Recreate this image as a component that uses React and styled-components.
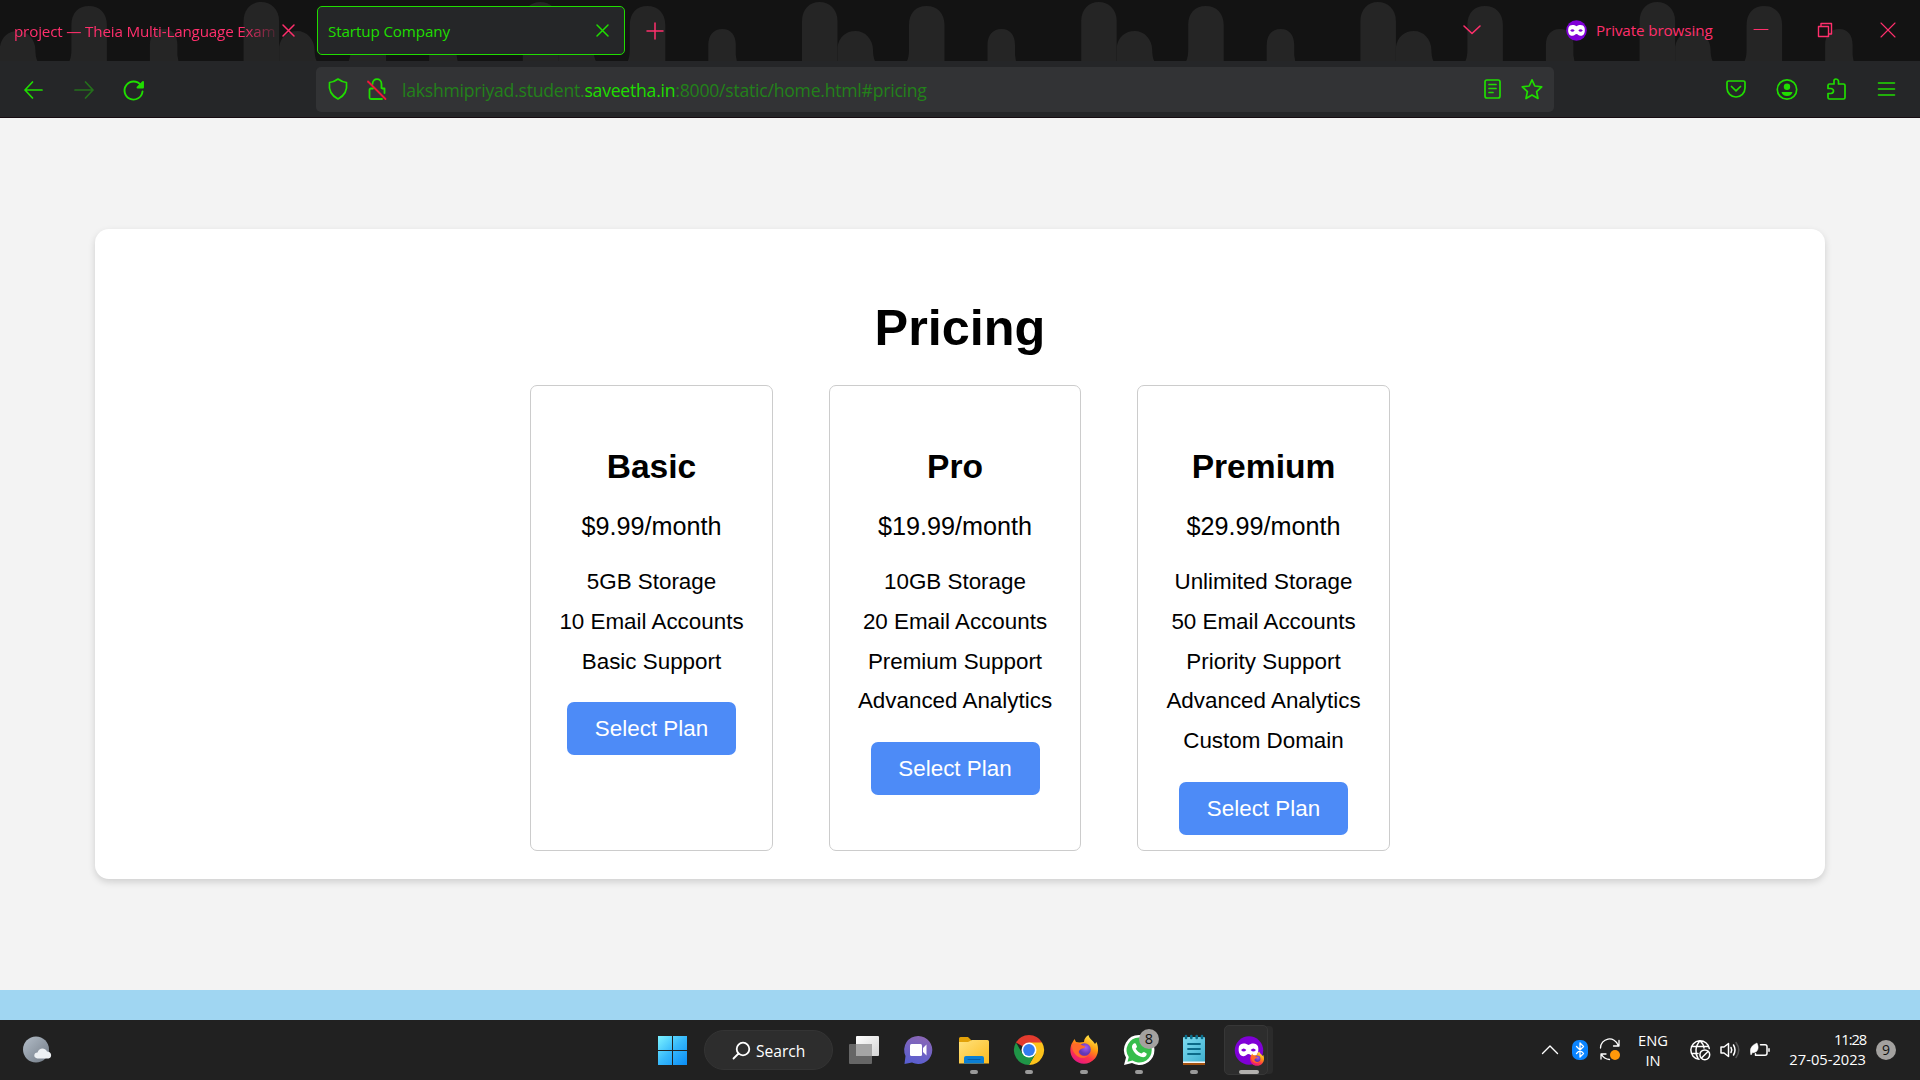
import React from 'react';
import styled, { createGlobalStyle } from 'styled-components';

const GREEN = '#20dd00';
const PINK = '#ff2f6c';

const Global = createGlobalStyle`
  * { box-sizing: border-box; }
  body { margin: 0; background: #f3f3f3; overflow: hidden; }
`;

const Screen = styled.div`
  width: 1920px;
  height: 1080px;
  display: flex;
  flex-direction: column;
  overflow: hidden;
  font-family: "Open Sans", "Noto Sans", sans-serif;
`;

/* ---------- browser chrome ---------- */

const TabStrip = styled.header`
  position: relative;
  height: 61px;
  flex: none;
  display: flex;
  align-items: flex-start;
  background: #131313;
  color: ${PINK};
`;

const Backdrop = styled.svg`
  position: absolute;
  inset: 0;
`;

const Icon = styled.svg`
  position: relative;
  flex: none;
  display: block;
  margin-left: ${(p) => p.$ml || 0}px;
  margin-top: ${(p) => p.$mt || 0}px;
  overflow: visible;
  fill: none;
  stroke: ${(p) => p.$color || 'none'};
  stroke-width: ${(p) => p.$sw || 1.7}px;
  stroke-linecap: round;
  stroke-linejoin: round;
`;

const Label = styled.span`
  position: relative;
  display: block;
  flex: none;
  white-space: nowrap;
  font-size: ${(p) => p.$size || 15}px;
  line-height: 20px;
  letter-spacing: ${(p) => p.$ls || 0}px;
  color: ${(p) => p.$color || 'inherit'};
`;

const BackTab = styled.div`
  width: 317px;
  height: 61px;
  flex: none;
  display: flex;
  padding: 21px 0 0 14px;
`;

const FadingTitle = styled.div`
  width: 264px;
  flex: none;
  mask-image: linear-gradient(to right, #000 228px, transparent 268px);
`;

const ActiveTab = styled.div`
  position: relative;
  width: 308px;
  height: 49px;
  flex: none;
  margin-top: 6px;
  padding: 14px 16px 0 10px;
  display: flex;
  justify-content: space-between;
  border: 1.5px solid ${GREEN};
  border-radius: 5px;
  background: #252628;
  color: ${GREEN};
`;

const WindowControls = styled.div`
  position: relative;
  display: flex;
  margin-left: auto;
  padding-right: 25px;
`;

const PrivateLabel = styled.div`
  width: 138px;
  padding: 20px 0 0 9px;
`;

const Toolbar = styled.nav`
  height: 57px;
  flex: none;
  display: flex;
  align-items: flex-start;
  background: #252628;
  border-bottom: 1px solid #160c11;
`;

const UrlBar = styled.div`
  width: 1238px;
  height: 45px;
  flex: none;
  margin: 6px 0 0 172px;
  display: flex;
  border-radius: 5px;
  background: #323335;
`;

const Url = styled(Label)`
  margin: 13px auto 0 15px;
  color: #23811a;
  b { font-weight: 400; color: ${GREEN}; }
`;

const UrlActions = styled.div`
  display: flex;
  padding-right: 11px;
`;

/* ---------- page ---------- */

const Page = styled.main`
  height: 872px;
  flex: none;
  padding: 111px 95px 0;
  background: #f3f3f3;
  font-family: "Liberation Sans", Arial, sans-serif;
  color: #000;
`;

const PricingPanel = styled.section`
  height: 650px;
  padding-top: 70px;
  display: flex;
  flex-direction: column;
  align-items: center;
  background: #fff;
  border-radius: 14px;
  box-shadow: 0 3px 7px rgba(0, 0, 0, 0.15);
`;

const Title = styled.h1`
  margin: 0 0 28px;
  font-size: 50.4px;
  line-height: 58px;
`;

const Plans = styled.div`
  display: flex;
  gap: 56px;
`;

const Plan = styled.article`
  width: ${(p) => p.$width}px;
  height: 466px;
  padding-top: 62px;
  display: flex;
  flex-direction: column;
  align-items: center;
  border: 1px solid #ccc;
  border-radius: 7px;
`;

const PlanName = styled.h2`
  margin: 0 0 26px;
  font-size: 33.6px;
  line-height: 38px;
`;

const Price = styled.p`
  margin: 0 0 22px;
  font-size: 25.2px;
  line-height: 28px;
`;

const Features = styled.ul`
  margin: 0 0 20.6px;
  padding: 0;
  list-style: none;
  text-align: center;
  font-size: 22.4px;
  line-height: 39.8px;
  white-space: nowrap;
`;

const SelectButton = styled.button`
  width: 169px;
  height: 53px;
  flex: none;
  padding: 0;
  border: 0;
  border-radius: 7px;
  background: #4d8bf7;
  color: #fff;
  font: 22.4px/53px "Liberation Sans", Arial, sans-serif;
`;

const FooterStrip = styled.div`
  height: 30px;
  flex: none;
  background: #a0d6f2;
`;

/* ---------- taskbar ---------- */

const Taskbar = styled.footer`
  height: 60px;
  flex: none;
  display: flex;
  align-items: flex-start;
  background: #212121;
  color: #fff;
`;

const SearchPill = styled.div`
  width: 129px;
  height: 40px;
  flex: none;
  margin: 10px 0 0 17px;
  padding: 10px 0 0 28px;
  display: flex;
  gap: 6px;
  border-radius: 20px;
  background: #2d2d2d;
  border: 1px solid #343434;
`;

const AppGroup = styled.div`
  display: flex;
  margin-left: 13px;
`;

const AppButton = styled.div`
  position: relative;
  width: 55px;
  height: 60px;
  flex: none;
  display: flex;
  justify-content: center;
  padding-top: 15px;
  &::after {
    content: "";
    position: absolute;
    bottom: 6px;
    left: 50%;
    width: 8px;
    height: 4px;
    margin-left: -4px;
    border-radius: 2px;
    background: #9a9a9a;
  }
`;

const Badge = styled.span`
  position: absolute;
  top: 9px;
  left: 28px;
  width: 20px;
  height: 20px;
  border-radius: 50%;
  background: #a3a19f;
  color: #111;
  font-size: 14.5px;
  line-height: 20px;
  text-align: center;
`;

const ActiveApp = styled.div`
  position: relative;
  width: 44px;
  height: 50px;
  flex: none;
  margin: 5px 0 0 3px;
  padding: 10px 0 0 10px;
  border-radius: 5px;
  border: 1px solid #373737;
  background: #2d2d2d;
  box-shadow: 6px 0 0 -1px #2b2b2b;
  &::after {
    content: "";
    position: absolute;
    left: 14px;
    bottom: 0;
    width: 20px;
    height: 4px;
    border-radius: 2px;
    background: #b3b1af;
  }
`;

const Tray = styled.div`
  display: flex;
  margin-left: auto;
  padding-right: 24px;
`;

const Stack = styled.div`
  width: ${(p) => p.$width}px;
  margin-left: ${(p) => p.$ml}px;
  padding-top: ${(p) => p.$pt || 9}px;
  display: flex;
  flex-direction: column;
  align-items: ${(p) => p.$align || 'center'};
`;

const Count = styled.span`
  width: 20px;
  height: 20px;
  margin: 20px 0 0 10px;
  border-radius: 50%;
  background: #a3a19f;
  color: #111;
  font-size: 14px;
  line-height: 20px;
  text-align: center;
`;

/* ---------- drawings ---------- */

const ARCH_PERIOD = 279.2;

function Arches() {
  return (
    <Backdrop width="1920" height="61" fill="#252525">
      {[0, 1, 2, 3, 4, 5, 6].map((n) => (
        <g key={n} transform={`translate(${n * ARCH_PERIOD - 35.6} 0)`}>
          <path d="M0 61V21C0 9 8 2 17.5 2S35.500 9 35.500 21V61z" />
          <path d="M35.500 61V47C37 37 44 31 53.500 31S71 39 71 50Q71 57 73 61z" />
          <path d="M105 61Q107 57 107 50V25C107 13 114 6 124.500 6S142.500 13 142.500 25V61z" />
          <path d="M185.500 61V45C185.500 35 191 29 199.500 29S213 35 213 45V55L214 61z" />
        </g>
      ))}
    </Backdrop>
  );
}

const Cross = ({ ml, mt, size = 11, color, sw = 1.5 }) => (
  <Icon width={size} height={size} $ml={ml} $mt={mt} $color={color} $sw={sw}>
    <path d={`M0 0L${size} ${size}M${size} 0L0 ${size}`} />
  </Icon>
);

const MaskShape = () => (
  <path
    d="M-7-2.500C-6-5.500-2-5.200 0-3.600C2-5.200 6-5.500 7-2.500C8 2 6 4.800 3.500 4.600C1.800 4.500 1.200 3 0 3S-1.800 4.500-3.500 4.600C-6 4.800-8 2-7-2.500zM-5.500 0Q-3.500 2.300-1.600 0Q-3.500-2.300-5.500 0zM5.500 0Q3.500 2.300 1.600 0Q3.500-2.300 5.500 0z"
    fill="#fff"
    fillRule="evenodd"
  />
);

const FirefoxGlyph = ({ id }) => (
  <>
    <defs>
      <linearGradient id={`${id}a`} x1=".8" y1="0" x2=".3" y2="1">
        <stop offset="0" stopColor="#fff44f" />
        <stop offset=".4" stopColor="#ff980e" />
        <stop offset=".7" stopColor="#ff3647" />
        <stop offset="1" stopColor="#e31587" />
      </linearGradient>
      <radialGradient id={`${id}b`} cx=".6" cy=".35">
        <stop offset="0" stopColor="#a45cf5" />
        <stop offset="1" stopColor="#6338b4" />
      </radialGradient>
    </defs>
    <path d="M1.500 9L4.500 4L6 7L9.500 7.500L14 7C14 4 16 1.500 18.500 0C19 4 23 5 25 9L26.500 7C29 13 28.500 19 25 23.500C19 30.500 9 30 4 24.500C0 20 -.5 14 1.500 9z" fill={`url(#${id}a)`} />
    <circle cx="14.500" cy="14.500" r="6.300" fill={`url(#${id}b)`} />
    <path d="M2 10.500C5 7.500 9 7.500 11.500 10L15.500 11.500Q14.500 13.500 12 13.500C10 14.500 8 16 9 18.500C11 21.500 15 21.800 18 20.500C15 24 9 23.500 5.500 19.500C3 17 2 14 2 10.500z" fill="#ff6a2a" />
  </>
);

function TabBar() {
  return (
    <TabStrip>
      <Arches />
      <BackTab>
        <FadingTitle>
          <Label $size={15.2} $ls={-0.17}>project — Theia Multi-Language Exam</Label>
        </FadingTitle>
        <Cross ml={5} mt={4} color={PINK} />
      </BackTab>
      <ActiveTab>
        <Label $size={15.2} $ls={-0.12}>Startup Company</Label>
        <Cross mt={4} color={GREEN} />
      </ActiveTab>
      <Icon width="16" height="16" $ml={22} $mt={23} $color={PINK} $sw={1.5}>
        <path d="M0 8H16M8 0V16" />
      </Icon>
      <WindowControls>
        <Icon width="16" height="9" $mt={25} $color={PINK} $sw={1.6}>
          <path d="M0 1L8 8.500L16 1" />
        </Icon>
        <Icon width="21" height="21" $ml={86} $mt={20} viewBox="-10.5 -10.5 21 21">
          <circle r="10.300" fill="#8000d7" />
          <g transform="scale(1.150)"><MaskShape /></g>
        </Icon>
        <PrivateLabel>
          <Label $size={15.2} $ls={-0.1}>Private browsing</Label>
        </PrivateLabel>
        <Icon width="14" height="14" $ml={29} $mt={23} $color={PINK} $sw={1}>
          <path d="M0 6.500H14" />
        </Icon>
        <Icon width="14" height="14" $ml={50} $mt={23} $color={PINK} $sw={1.4}>
          <path d="M.5 3.500H10.500V13.500H.500zM3 3V.5H13.500V11H11" />
        </Icon>
        <Cross ml={49} mt={23} size={14} color={PINK} sw={1.1} />
      </WindowControls>
    </TabStrip>
  );
}

function NavBar() {
  return (
    <Toolbar>
      <Icon width="19" height="18" $ml={24} $mt={20} $color={GREEN}>
        <path d="M18 9H1M8.500 1L1 9L8.500 17" />
      </Icon>
      <Icon width="19" height="18" $ml={32} $mt={20} $color="#24701b">
        <path d="M0 9H18M10.500 1L18 9L10.500 17" />
      </Icon>
      <Icon width="20" height="20" $ml={30} $mt={20} $color={GREEN} $sw={1.9}>
        <path d="M16.800 4.200A9 9 0 1 0 18.500 10.500" />
        <path d="M19 1V6.500H13.500z" fill={GREEN} />
      </Icon>
      <UrlBar>
        <Icon width="20" height="22" $ml={12} $mt={11} $color={GREEN}>
          <path d="M10 1Q14 4 18.500 4.500Q20 16 10 21Q0 16 1.500 4.500Q6 4 10 1z" />
        </Icon>
        <Icon width="20" height="22" $ml={19} $mt={11} $color={GREEN} $sw={1.8}>
          <path d="M5.500 6C5.500 -.5 14.500 -.5 14.500 6V10M15.500 10.500H17.500V15M6 10.500H4Q2.500 10.500 2.500 12V19.500Q2.500 21 4 21H15" />
          <path d="M1 3.500L18.500 21" stroke="#f01838" />
        </Icon>
        <Url $size={17.6} $ls={-0.23}>
          lakshmipriyad.student.<b>saveetha.in</b>:8000/static/home.html#pricing
        </Url>
        <UrlActions>
          <Icon width="17" height="20" $mt={12} $color={GREEN}>
            <rect x="1" y="1" width="15" height="18" rx="2" />
            <path d="M5 5.500H12M5 9.500H12M5 13.500H9" />
          </Icon>
          <Icon width="22" height="21" $ml={20} $mt={12} $color={GREEN}>
            <path d="M11 .8L13.800 7L20.700 7.900L15.600 12.600L17 19.500L11 16L5 19.500L6.400 12.600L1.300 7.900L8.200 7z" />
          </Icon>
        </UrlActions>
      </UrlBar>
      <Icon width="20" height="18" $ml={172} $mt={19} $color={GREEN}>
        <path d="M2.500 1H17.500Q19 1 19 2.500V8A9 9 0 0 1 1 8V2.500Q1 1 2.500 1zM5.500 6.500L10 10.800L14.500 6.500" />
      </Icon>
      <Icon width="22" height="22" $ml={30} $mt={18} $color={GREEN}>
        <circle cx="11" cy="10.500" r="9.700" />
        <circle cx="11" cy="7.700" r="3.200" fill={GREEN} stroke="none" />
        <path d="M5.500 13H16.500Q15.500 17 11 17Q6.500 17 5.500 13z" fill={GREEN} stroke="none" />
      </Icon>
      <Icon width="19" height="22" $ml={29} $mt={17} $color={GREEN}>
        <path d="M7 6V3Q7 1 9 1T11.500 3V6H16.500Q18 6 18 7.500V19.500Q18 21 16.500 21H2.500Q1 21 1 19.500V15.500H4Q6.500 15 6.500 13T4 10.500H1V7.500Q1 6 2.500 6z" />
      </Icon>
      <Icon width="17" height="13" $ml={32} $mt={21} $color={GREEN} $sw={1.6}>
        <path d="M.5 1H16.500M.500 7H16.500M.500 13H16.500" />
      </Icon>
    </Toolbar>
  );
}

const PLANS = [
  { name: 'Basic', price: '$9.99/month', width: 243, features: ['5GB Storage', '10 Email Accounts', 'Basic Support'] },
  { name: 'Pro', price: '$19.99/month', width: 252, features: ['10GB Storage', '20 Email Accounts', 'Premium Support', 'Advanced Analytics'] },
  {
    name: 'Premium',
    price: '$29.99/month',
    width: 253,
    features: ['Unlimited Storage', '50 Email Accounts', 'Priority Support', 'Advanced Analytics', 'Custom Domain'],
  },
];

function TaskbarApps() {
  return (
    <>
      <Icon width="29" height="29" $ml={606} $mt={16}>
        <defs>
          <linearGradient id="win" x1="0" y1="0" x2="29" y2="29" gradientUnits="userSpaceOnUse">
            <stop offset="0" stopColor="#7df3ff" />
            <stop offset=".5" stopColor="#36b8fb" />
            <stop offset="1" stopColor="#0a8cf5" />
          </linearGradient>
        </defs>
        <path d="M0 0H14V14H0zM15 0H29V14H15zM0 15H14V29H0zM15 15H29V29H15z" fill="url(#win)" />
      </Icon>
      <SearchPill>
        <Icon width="17" height="17" $mt={1} $color="#fff" $sw={1.8}>
          <circle cx="10" cy="7" r="6.300" />
          <path d="M5.500 11.500L.500 16.500" />
        </Icon>
        <Label $size={15.6}>Search</Label>
      </SearchPill>
      <Icon width="30" height="28" $ml={16} $mt={16}>
        <defs>
          <linearGradient id="tv" x1="0" y1="0" x2="1" y2="1">
            <stop offset="0" stopColor="#fff" />
            <stop offset="1" stopColor="#d4d4d4" />
          </linearGradient>
        </defs>
        <rect x="7" y="0" width="23" height="20" rx="1" fill="url(#tv)" />
        <rect x="0" y="8" width="23" height="20" rx="1" fill="#666" />
        <path d="M7 8H23V20H7z" fill="#a5a5a5" />
      </Icon>
      <Icon width="29" height="28" $ml={25} $mt={16}>
        <defs>
          <linearGradient id="chat" x1=".7" y1="0" x2=".4" y2="1">
            <stop offset="0" stopColor="#8c67b5" />
            <stop offset="1" stopColor="#5a5fd0" />
          </linearGradient>
        </defs>
        <path d="M14.500 0A14 14 0 1 1 8 26.500L.500 28L1.500 20A14 14 0 0 1 14.500 0z" fill="url(#chat)" />
        <rect x="6" y="8" width="12" height="12" rx="1.500" fill="#fff" />
        <path d="M19 12L22.500 8.500V19.500L19 16z" fill="#fff" />
      </Icon>
      <AppGroup>
        <AppButton>
          <Icon width="30" height="28" $mt={2}>
            <defs>
              <linearGradient id="fold" x1="0" y1="0" x2="1" y2="1">
                <stop offset="0" stopColor="#ffe27d" />
                <stop offset="1" stopColor="#fdbb1e" />
              </linearGradient>
            </defs>
            <path d="M0 8V1.500Q0 0 1.500 0H9L13 4H20V8z" fill="#e2a108" />
            <path d="M0 5H9L13 3H28.500Q30 3 30 4.500V26.500H0z" fill="url(#fold)" />
            <path d="M5 26.500V21Q5 19 7 19H23Q25 19 25 21V26.500z" fill="#0b7fd4" />
            <path d="M9 22.500H21" stroke="#075ea8" strokeWidth="1" />
          </Icon>
        </AppButton>
        <AppButton>
          <Icon width="30" height="30" viewBox="-15 -15 30 30">
            <path d="M0 0L-13-7.500A15 15 0 0 1 13-7.500z" fill="#e33b2e" />
            <path d="M0-7.500H13A15 15 0 0 1 0 15L6.500 3.700z" fill="#fcc21b" />
            <path d="M-13-7.500A15 15 0 0 0 0 15L6.500 3.700L-6.500 3.700z" fill="#1f9547" />
            <circle r="7.500" fill="#fff" />
            <circle r="5.900" fill="#347cf0" />
          </Icon>
        </AppButton>
        <AppButton>
          <Icon width="28" height="29"><FirefoxGlyph id="ff" /></Icon>
        </AppButton>
        <AppButton>
          <Icon width="30" height="30">
            <path d="M15 0A15 15 0 1 1 8 28L0 30L2 22.500A15 15 0 0 1 15 0z" fill="#fff" />
            <path d="M15 2.500A12.500 12.500 0 1 1 8.500 25.500L3.500 26.800L4.800 22A12.500 12.500 0 0 1 15 2.500z" fill="#36bd4c" />
            <path d="M10 8.500C11.500 7.500 12 8.500 13 11.500C13 12.500 12 13 11.700 13.800C13 16 15 17.700 17.500 18.500C18.500 18 19 17 20 17C23 18.500 23 18.500 22.500 20C21 23 18 22.500 14.500 20.800C11 19 8.500 15.500 8 12.500C7.800 10.500 8.800 9 10 8.500z" fill="#fff" />
          </Icon>
          <Badge>8</Badge>
        </AppButton>
        <AppButton>
          <Icon width="22" height="30">
            <defs>
              <linearGradient id="np" x1="0" y1="0" x2="1" y2="1">
                <stop offset="0" stopColor="#7fdcf0" />
                <stop offset="1" stopColor="#3dafcf" />
              </linearGradient>
            </defs>
            <rect y="2" width="22" height="26" rx="1" fill="url(#np)" />
            <path d="M0 26.500H22V28H0z" fill="#f4f4f4" />
            <path d="M0 28H22V30H0z" fill="#a4520f" />
            <path d="M3 1V3M8.300 1V3M13.700 1V3M19 1V3" stroke="#0c6f8c" strokeWidth="2.600" />
            <path d="M5 9H17M5 14H17M5 19H17" stroke="#0b6a88" strokeWidth="1.800" />
          </Icon>
        </AppButton>
        <ActiveApp>
          <Icon width="29" height="29">
            <circle cx="14" cy="14.500" r="14.200" fill="#8000d7" />
            <g transform="translate(13.500 14) scale(1.360)"><MaskShape /></g>
            <g transform="translate(15 15.500) scale(.5)"><FirefoxGlyph id="fm" /></g>
          </Icon>
        </ActiveApp>
      </AppGroup>
    </>
  );
}

function SystemTray() {
  return (
    <Tray>
      <Icon width="16" height="9" $mt={25} $color="#fff" $sw={1.4}>
        <path d="M.5 8.500L8 1L15.500 8.500" />
      </Icon>
      <Icon width="16" height="20" $ml={14} $mt={20} $color="#fff" $sw={1.3}>
        <rect width="16" height="20" rx="7" fill="#0a84ff" stroke="none" />
        <path d="M4.500 6.500L11.500 13.500L8 17V3L11.500 6.500L4.500 13.500" />
      </Icon>
      <Icon width="20" height="20" $ml={12} $mt={20} $color="#fff" $sw={1.3}>
        <path d="M.5 8A9 9 0 0 1 18 5M19 .5V6H13.500M1 19V14H6M1.500 14.500Q4 19 9.500 19.500" />
        <circle cx="15" cy="15" r="5" fill="#ff980a" stroke="none" />
      </Icon>
      <Stack $width={34} $ml={16} $pt={10}>
        <Label $size={14.7}>ENG</Label>
        <Label $size={14.7}>IN</Label>
      </Stack>
      <Icon width="20" height="20" $ml={20} $mt={20} $color="#fff" $sw={1.5}>
        <path d="M19.300 8.500A9.300 9.300 0 1 0 9 19.300M1.500 6.500H18.500M1.500 13.500H8M8 18.500C5 14 5 6 10 .7C13 3.500 13.800 5.500 14 8" />
        <circle cx="14.800" cy="14.800" r="4.900" />
        <path d="M11.500 18L18 11.500" />
      </Icon>
      <Icon width="20" height="20" $ml={10} $mt={20} $color="#fff" $sw={1.5}>
        <path d="M1 7H4L8.500 3.500V16.500L4 13H1zM11 7.500Q12.500 10 11 12.500M13.500 5Q16.500 10 13.500 15" />
        <path d="M16 2.500Q21.500 10 16 17.500" stroke="#555" />
      </Icon>
      <Icon width="20" height="16" $ml={10} $mt={22} $color="#fff" $sw={1.5}>
        <path d="M10.500 2.800H15Q17 2.800 17 4.800V11.200Q17 13.200 15 13.200H5.500V11.800M19 6.800V9.200" />
        <path d="M.6 9Q-.2 4 7 1Q9.500 6.500 6.500 9.500Q4.500 11 2.500 10.500L1 13Q.2 11 .6 9z" fill="#fff" strokeWidth=".5" />
      </Icon>
      <Stack $width={84} $ml={12} $align="flex-end">
        <Label $size={14.7} $ls={-1.1}>11:28</Label>
        <Label $size={14.7}>27-05-2023</Label>
      </Stack>
      <Count>9</Count>
    </Tray>
  );
}

export default function App() {
  return (
    <Screen>
      <Global />
      <TabBar />
      <NavBar />
      <Page>
        <PricingPanel>
          <Title>Pricing</Title>
          <Plans>
            {PLANS.map((plan) => (
              <Plan key={plan.name} $width={plan.width}>
                <PlanName>{plan.name}</PlanName>
                <Price>{plan.price}</Price>
                <Features>
                  {plan.features.map((f) => (
                    <li key={f}>{f}</li>
                  ))}
                </Features>
                <SelectButton>Select Plan</SelectButton>
              </Plan>
            ))}
          </Plans>
        </PricingPanel>
      </Page>
      <FooterStrip />
      <Taskbar>
        <Icon width="29" height="27" $ml={23} $mt={16}>
          <defs>
            <linearGradient id="moon" x1="0" y1="0" x2="1" y2="1">
              <stop offset="0" stopColor="#b4bec9" />
              <stop offset="1" stopColor="#717a85" />
            </linearGradient>
          </defs>
          <circle cx="13" cy="13.500" r="13" fill="url(#moon)" />
          <path d="M14.500 22.500C10 22 10.500 16.500 14.500 16.500C16 12 21.500 11 24 15.500C29 15.500 29.500 22 25.500 22.500z" fill="#edf0f3" />
        </Icon>
        <TaskbarApps />
        <SystemTray />
      </Taskbar>
    </Screen>
  );
}
